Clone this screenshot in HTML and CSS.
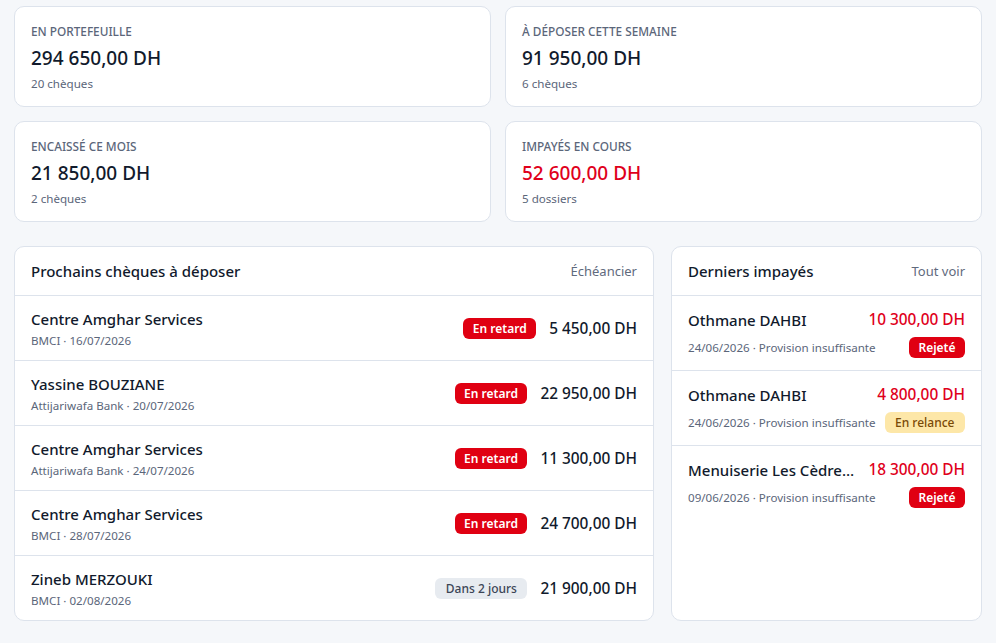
FILE: index.html
```html
<!DOCTYPE html>
<html lang="fr">
<head>
<meta charset="utf-8">
<link rel="stylesheet" href="styles.css">
</head>
<body>
<main class="page">
  <section class="stats">
    <div class="stat">
      <div class="stat-label">En portefeuille</div>
      <div class="stat-value">294 650,00 DH</div>
      <div class="stat-sub">20 chèques</div>
    </div>
    <div class="stat">
      <div class="stat-label">À déposer cette semaine</div>
      <div class="stat-value">91 950,00 DH</div>
      <div class="stat-sub">6 chèques</div>
    </div>
    <div class="stat">
      <div class="stat-label">Encaissé ce mois</div>
      <div class="stat-value">21 850,00 DH</div>
      <div class="stat-sub">2 chèques</div>
    </div>
    <div class="stat">
      <div class="stat-label">Impayés en cours</div>
      <div class="stat-value red">52 600,00 DH</div>
      <div class="stat-sub">5 dossiers</div>
    </div>
  </section>

  <section class="panels">
    <div class="panel">
      <div class="panel-head">
        <h2>Prochains chèques à déposer</h2>
        <a class="link">Échéancier</a>
      </div>
      <div class="row">
        <div class="who"><div class="name">Centre Amghar Services</div><div class="meta">BMCI · 16/07/2026</div></div>
        <div class="right"><span class="badge danger">En retard</span><span class="amount">5 450,00 DH</span></div>
      </div>
      <div class="row">
        <div class="who"><div class="name">Yassine BOUZIANE</div><div class="meta">Attijariwafa Bank · 20/07/2026</div></div>
        <div class="right"><span class="badge danger">En retard</span><span class="amount">22 950,00 DH</span></div>
      </div>
      <div class="row">
        <div class="who"><div class="name">Centre Amghar Services</div><div class="meta">Attijariwafa Bank · 24/07/2026</div></div>
        <div class="right"><span class="badge danger">En retard</span><span class="amount">11 300,00 DH</span></div>
      </div>
      <div class="row">
        <div class="who"><div class="name">Centre Amghar Services</div><div class="meta">BMCI · 28/07/2026</div></div>
        <div class="right"><span class="badge danger">En retard</span><span class="amount">24 700,00 DH</span></div>
      </div>
      <div class="row">
        <div class="who"><div class="name">Zineb MERZOUKI</div><div class="meta">BMCI · 02/08/2026</div></div>
        <div class="right"><span class="badge neutral">Dans 2 jours</span><span class="amount">21 900,00 DH</span></div>
      </div>
    </div>

    <div class="panel side">
      <div class="panel-head">
        <h2>Derniers impayés</h2>
        <a class="link">Tout voir</a>
      </div>
      <div class="irow">
        <div class="line"><span class="name">Othmane DAHBI</span><span class="amount red">10 300,00 DH</span></div>
        <div class="line"><span class="meta">24/06/2026 · Provision insuffisante</span><span class="badge danger">Rejeté</span></div>
      </div>
      <div class="irow">
        <div class="line"><span class="name">Othmane DAHBI</span><span class="amount red">4 800,00 DH</span></div>
        <div class="line"><span class="meta">24/06/2026 · Provision insuffisante</span><span class="badge warn">En relance</span></div>
      </div>
      <div class="irow">
        <div class="line"><span class="name">Menuiserie Les Cèdre…</span><span class="amount red">18 300,00 DH</span></div>
        <div class="line"><span class="meta">09/06/2026 · Provision insuffisante</span><span class="badge danger">Rejeté</span></div>
      </div>
    </div>
  </section>
</main>
</body>
</html>
```

FILE: styles.css
```css
* { box-sizing: border-box; }
html, body { margin: 0; padding: 0; }
body {
  background: #f5f7fa;
  font-family: "Noto Sans", "Open Sans", sans-serif;
  color: #172033;
}
.page { padding: 6px 14px 14px; }
.stats {
  display: grid;
  grid-template-columns: 1fr 1fr;
  gap: 14px;
}
.stat {
  background: #fff;
  border: 1px solid #dde3ec;
  border-radius: 10px;
  height: 101px;
  padding: 15px 16px;
}
.stat-label {
  font-size: 11.8px;
  font-weight: 500;
  text-transform: uppercase;
  color: #5b667a;
  line-height: 18px;
}
.stat-value {
  font-size: 19px;
  font-weight: 500;
  line-height: 26px;
  margin-top: 5px;
  color: #111a2c;
}
.stat-value.red, .amount.red { color: #e0001b; }
.stat-sub {
  font-size: 11.6px;
  color: #5b667a;
  margin-top: 5px;
  line-height: 16px;
}
.panels {
  display: grid;
  grid-template-columns: 640px 1fr;
  gap: 17px;
  margin-top: 24px;
  align-items: start;
}
.panel {
  background: #fff;
  border: 1px solid #dde3ec;
  border-radius: 10px;
  overflow: hidden;
}
.panel.side { align-self: stretch; }
.panel-head {
  display: flex;
  justify-content: space-between;
  align-items: center;
  height: 49px;
  padding: 0 16px;
  border-bottom: 1px solid #dde3ec;
}
.panel-head h2 {
  margin: 0;
  font-size: 15px;
  font-weight: 500;
  color: #111a2c;
}
.link {
  font-size: 13px;
  color: #5f6a7d;
}
.row {
  display: flex;
  justify-content: space-between;
  align-items: center;
  height: 65px;
  padding: 0 16px;
  border-bottom: 1px solid #dde3ec;
}
.row:last-child { border-bottom: none; height: 64px; }
.who { padding-top: 2px; }
.name {
  font-size: 15px;
  font-weight: 500;
  color: #111a2c;
  line-height: 20px;
  white-space: nowrap;
}
.meta {
  font-size: 11.6px;
  color: #5b667a;
  line-height: 16px;
  white-space: nowrap;
}
.who .meta { margin-top: 4px; }
.right {
  display: flex;
  align-items: center;
  gap: 13px;
}
.amount {
  font-size: 15.4px;
  font-weight: 500;
  color: #111a2c;
  white-space: nowrap;
}
.badge {
  display: inline-block;
  font-size: 12px;
  font-weight: 600;
  line-height: 21px;
  height: 21px;
  padding: 0 9.5px;
  border-radius: 6px;
  white-space: nowrap;
  flex-shrink: 0;
}
.badge.danger { background: #e00012; color: #fff; }
.badge.neutral { background: #e7ebf0; color: #3b4556; font-weight: 500; padding: 0 10.5px; }
.badge.warn { background: #fde7a8; color: #7a4a06; font-weight: 500; padding: 0 10.5px; }
.irow {
  padding: 13px 16px 0;
  height: 75px;
  border-bottom: 1px solid #dde3ec;
}
.irow:last-child { border-bottom: none; }
.line {
  display: flex;
  justify-content: space-between;
  align-items: center;
  gap: 8px;
}
.line + .line { margin-top: 7px; }
```
